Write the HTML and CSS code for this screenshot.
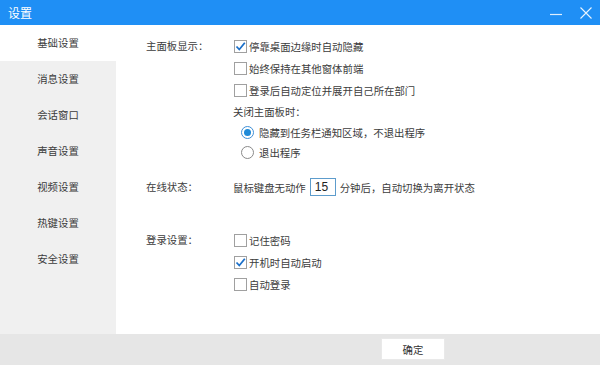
FILE: index.html
```html
<!DOCTYPE html>
<html lang="zh">
<head>
<meta charset="utf-8">
<title>设置</title>
<link rel="stylesheet" href="styles.css">
</head>
<body>
<div class="window">
  <div class="titlebar">
    <span class="title">设置</span>
    <div class="controls">
      <svg class="ctl" width="14" height="14" viewBox="0 0 14 14"><line x1="1" y1="8.5" x2="13" y2="8.5" stroke="#fff" stroke-opacity="0.85" stroke-width="1.2"/></svg>
      <svg class="ctl" width="14" height="14" viewBox="0 0 14 14"><path d="M1.5 1.5 L12.5 12.5 M12.5 1.5 L1.5 12.5" stroke="#fff" stroke-opacity="0.9" stroke-width="1.1" fill="none"/></svg>
    </div>
  </div>
  <div class="main">
    <ul class="sidebar">
      <li class="active">基础设置</li>
      <li>消息设置</li>
      <li>会话窗口</li>
      <li>声音设置</li>
      <li>视频设置</li>
      <li>热键设置</li>
      <li>安全设置</li>
    </ul>
    <div class="content">
      <div class="section s1">
        <div class="label">主面板显示：</div>
        <div class="controls-col">
          <div class="row"><span class="cb checked"><svg width="11" height="11" viewBox="0 0 11 11"><path d="M1.5 5.5 L4.3 8.5 L9.8 1.8" stroke="#1a6fc9" stroke-width="1.8" fill="none"/></svg></span>停靠桌面边缘时自动隐藏</div>
          <div class="row"><span class="cb"></span>始终保持在其他窗体前端</div>
          <div class="row"><span class="cb"></span>登录后自动定位并展开自己所在部门</div>
          <div class="row sub">关闭主面板时：</div>
          <div class="rrow"><span class="rb on"><span class="dot"></span></span>隐藏到任务栏通知区域，不退出程序</div>
          <div class="rrow"><span class="rb"></span>退出程序</div>
        </div>
      </div>
      <div class="section s2">
        <div class="label">在线状态：</div>
        <div class="controls-col">
          <div class="row plain">鼠标键盘无动作<span class="num">15</span>分钟后，自动切换为离开状态</div>
        </div>
      </div>
      <div class="section s3">
        <div class="label">登录设置：</div>
        <div class="controls-col">
          <div class="row"><span class="cb"></span>记住密码</div>
          <div class="row"><span class="cb checked"><svg width="11" height="11" viewBox="0 0 11 11"><path d="M1.5 5.5 L4.3 8.5 L9.8 1.8" stroke="#1a6fc9" stroke-width="1.8" fill="none"/></svg></span>开机时自动启动</div>
          <div class="row"><span class="cb"></span>自动登录</div>
        </div>
      </div>
    </div>
  </div>
  <div class="footer">
    <button class="ok">确定</button>
  </div>
</div>
</body>
</html>
```
FILE: styles.css
```css
* { box-sizing: border-box; }
html, body { margin: 0; padding: 0; }
body {
  font-family: "Noto Sans CJK SC", "Noto Sans", sans-serif;
  font-size: 10.4px;
  color: #3c3c3c;
  background: #fff;
}
.window {
  width: 600px;
  height: 365px;
  display: flex;
  flex-direction: column;
  overflow: hidden;
}
.titlebar {
  height: 25px;
  background: #1f8ff5;
  display: flex;
  align-items: center;
  justify-content: space-between;
  padding: 0 7px 0 8px;
}
.title {
  color: #fff;
  font-size: 12px;
  line-height: 25px;
}
.controls {
  display: flex;
  gap: 16px;
  align-items: center;
}
.ctl { display: block; }
.main {
  flex: 1;
  display: flex;
  min-height: 0;
}
.sidebar {
  list-style: none;
  margin: 0;
  padding: 0;
  width: 116px;
  background: #f0f0f0;
}
.sidebar li {
  height: 36px;
  line-height: 36px;
  text-align: center;
}
.sidebar li.active { background: #fff; }
.content {
  flex: 1;
  padding: 10px 0 0 30px;
  display: flex;
  flex-direction: column;
}
.section {
  display: flex;
}
.label {
  width: 87px;
  height: 22px;
  line-height: 22px;
}
.controls-col {
  display: flex;
  flex-direction: column;
}
.row {
  height: 22px;
  display: flex;
  align-items: center;
}
.row.sub { height: 21px; }
.rrow {
  height: 20px;
  display: flex;
  align-items: center;
  padding-left: 8px;
}
.s2 { margin-top: 14px; }
.s3 { margin-top: 31px; }
.cb {
  width: 13px;
  height: 13px;
  border: 1px solid #a0a0a0;
  background: #fff;
  margin: 0 2px 0 1px;
  display: flex;
  align-items: center;
  justify-content: center;
}
.cb svg { display: block; }
.rb {
  width: 13px;
  height: 13px;
  border: 1px solid #8a8a8a;
  border-radius: 50%;
  margin-right: 5px;
  display: flex;
  align-items: center;
  justify-content: center;
  background: #fff;
}
.rb.on { border-color: #3d8ed6; }
.rb .dot {
  width: 7px;
  height: 7px;
  border-radius: 50%;
  background: #1e8ad8;
}
.num {
  width: 26px;
  height: 18px;
  border: 1px solid #5d9ccc;
  margin: 0 4px 0 4px;
  font-size: 12px;
  line-height: 16px;
  padding-left: 4px;
  color: #222;
  font-family: "Liberation Sans", sans-serif;
}
.footer {
  height: 31px;
  background: #e6e6e6;
  display: flex;
  align-items: flex-start;
  padding: 4px 0 0 381px;
}
.ok {
  width: 64px;
  height: 22px;
  border: 1px solid #e9e9e9;
  background: #fff;
  font-family: "Noto Sans CJK SC", sans-serif;
  font-size: 10.4px;
  color: #333;
  padding: 0;
}
```
